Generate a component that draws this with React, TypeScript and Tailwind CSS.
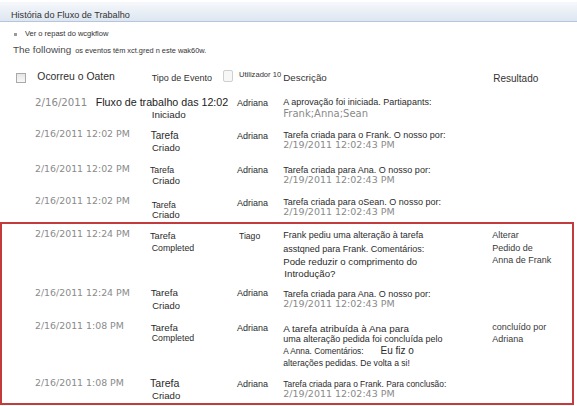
import * as React from "react";

// shared text styles
const gray = "font-['DejaVu_Sans',Verdana,sans-serif] text-[#8a8a8a]";

type RowProps = {
  className: string;
  when: React.ReactNode;
  event: React.ReactNode;
  user: React.ReactNode;
  desc: React.ReactNode;
  result?: React.ReactNode;
};

const Row = ({ className, when, event, user, desc, result }: RowProps) => (
  <div className={`flex items-start ${className}`}>
    <div className="w-[115px] shrink-0 whitespace-nowrap">{when}</div>
    <div className="w-[87px] shrink-0 whitespace-nowrap">{event}</div>
    <div className="w-[46.3px] shrink-0 whitespace-nowrap">{user}</div>
    <div className="w-[209px] shrink-0 whitespace-nowrap">{desc}</div>
    <div className="whitespace-nowrap text-[9px] text-[#3a3a3a]">{result}</div>
  </div>
);

const When = ({ children }: { children: React.ReactNode }) => (
  <div className={`${gray} text-[9.4px] leading-[12px]`}>{children}</div>
);

const TaskCreated = ({ text, due, size = "text-[9px]" }: { text: string; due: string; size?: string }) => (
  <div className="pt-[2.3px]">
    <div className={`${size} leading-[10px]`}>{text}</div>
    <div className={`${gray} text-[9.5px] leading-[9px]`}>{due}</div>
  </div>
);

const App = () => {
  return (
    <div className="w-[577px] h-[406px] overflow-hidden bg-white font-['Liberation_Sans',Arial,sans-serif] text-[#2b2b2b]">
      <div className="mt-[2px] h-[20px] border-b border-[#b6c5d9] bg-linear-to-b from-[#f6f8fb] to-[#dde6f1] pl-[11px] pt-[7px] text-[9.1px] leading-[12px] text-[#333]">
        História do Fluxo de Trabalho
      </div>

      <div className="mt-[7px] flex items-center h-[10px]">
        <span className="ml-[14px] w-[3px] h-[3px] bg-[#9a9a9a]"></span>
        <span className="ml-[8px] text-[7.5px] leading-[10px] text-[#333]">Ver o repast do wcgkflow</span>
      </div>

      <div className="mt-[5px] flex items-baseline pl-[13px] leading-[12px] whitespace-nowrap">
        <span className="text-[9.9px] text-[#4a4a4a]">The following</span>
        <span className="ml-[4px] text-[7.4px] text-[#333]">os eventos têm xct.gred n este wak60w.</span>
      </div>

      {/* column headers */}
      <div className="mt-[12px] flex items-start h-[16px] leading-[12px] whitespace-nowrap">
        <div className="ml-[16px] mt-[3.7px] w-[10px] h-[10.3px] shrink-0 border border-[#a9a9a9] bg-linear-to-b from-[#e6e6e6] to-[#f8f8f8]"></div>
        <div className="ml-[11.3px] w-[114.4px] shrink-0 pt-[2px] text-[10.4px] text-[#2e2e2e]">Ocorreu o Oaten</div>
        <div className="w-[71px] shrink-0 pt-[3.3px] text-[9px] text-[#333]">Tipo de Evento</div>
        <div className="mt-[1px] w-[10.6px] h-[12px] shrink-0 rounded-[2px] border border-[#cfcfcf] bg-[#f7f7f7]"></div>
        <div className="ml-[5.7px] w-[44.3px] shrink-0 pt-0 text-[7.6px] text-[#333]">Utilizador 10</div>
        <div className="w-[210px] shrink-0 pt-[3.3px] text-[9.8px] text-[#333]">Descrição</div>
        <div className="pt-[4.3px] text-[10px] text-[#333]">Resultado</div>
      </div>

      <div className="mt-[11px]">
        <Row
          className="h-[32px] pl-[35px]"
          when={
            <div className="flex items-baseline leading-[12px]">
              <span className={`${gray} w-[60.7px] shrink-0 text-[10.2px]`}>2/16/2011</span>
              <span className="shrink-0 text-[10.7px] text-[#222]">Fluxo de trabalho das 12:02</span>
            </div>
          }
          event={<div className="pt-[13px] pl-[1.7px] text-[9.9px] leading-[12px]">Iniciado</div>}
          user={<div className="pt-[1px] text-[9px] leading-[12px]">Adriana</div>}
          desc={
            <div>
              <div className="text-[9px] leading-[12px]">A aprovação foi iniciada. Partiapants:</div>
              <div className={`${gray} text-[10px] leading-[12px]`}>Frank;Anna;Sean</div>
            </div>
          }
        />
        <Row
          className="h-[35px] pl-[35px]"
          when={<When>2/16/2011 12:02 PM</When>}
          event={
            <div className="pt-[2px] leading-[12.2px]">
              <div className="pl-[0.7px] text-[10px]">Tarefa</div>
              <div className="pl-[2px] text-[9.5px]">Criado</div>
            </div>
          }
          user={<div className="pt-[2px] text-[9px] leading-[12px]">Adriana</div>}
          desc={<TaskCreated text="Tarefa criada para o Frank. O nosso por:" due="2/19/2011 12:02:43 PM" />}
        />
        <Row
          className="h-[32px] pl-[35px]"
          when={<When>2/16/2011 12:02 PM</When>}
          event={
            <div className="pt-[2px] leading-[10.7px]">
              <div className="text-[8.7px]">Tarefa</div>
              <div className="pl-[2.3px] text-[9.4px]">Criado</div>
            </div>
          }
          user={<div className="pt-[1px] text-[9px] leading-[12px]">Adriana</div>}
          desc={<TaskCreated text="Tarefa criada para Ana. O nosso por:" due="2/19/2011 12:02:43 PM" />}
        />
        <Row
          className="h-[27px] pl-[35px]"
          when={<When>2/16/2011 12:02 PM</When>}
          event={
            <div className="pt-[5px] leading-[10px]">
              <div className="pl-[1.7px] text-[8.7px]">Tarefa</div>
              <div className="pl-[2px] text-[9.4px]">Criado</div>
            </div>
          }
          user={<div className="pt-[1.7px] text-[9px] leading-[12px]">Adriana</div>}
          desc={<TaskCreated text="Tarefa criada para oSean. O nosso por:" due="2/19/2011 12:02:43 PM" />}
        />

        {/* change request block */}
        <div className="w-[574px] border-2 border-[#c23c3d] pt-[4px]">
          <Row
            className="h-[59px] pl-[33px]"
            when={<When>2/16/2011 12:24 PM</When>}
            event={
              <div className="pt-[2px] leading-[12px]">
                <div className="text-[9.2px]">Tarefa</div>
                <div className="pl-[1.7px] text-[8.8px]">Completed</div>
              </div>
            }
            user={<div className="pt-[2px] pl-[2px] text-[8.6px] leading-[12px]">Tiago</div>}
            desc={
              <div className="pt-[0.3px]">
                <div className="text-[9px] leading-[14px]">Frank pediu uma alteração à tarefa</div>
                <div className="text-[9px] leading-[14px]">asstqned para Frank. Comentários:</div>
                <div className="text-[9.6px] leading-[12.5px]">Pode reduzir o comprimento do</div>
                <div className="pl-[1px] text-[9.7px] leading-[10px]">Introdução?</div>
              </div>
            }
            result={
              <div className="pt-[1.3px] leading-[12.5px]">
                <div>Alterar</div>
                <div>Pedido de</div>
                <div>Anna de Frank</div>
              </div>
            }
          />
          <Row
            className="h-[33px] pl-[33px]"
            when={<When>2/16/2011 12:24 PM</When>}
            event={
              <div className="leading-[12.7px]">
                <div className="pl-[0.7px] text-[9.8px]">Tarefa</div>
                <div className="pl-[2.3px] text-[9.4px]">Criado</div>
              </div>
            }
            user={<div className="text-[9px] leading-[12px]">Adriana</div>}
            desc={<TaskCreated text="Tarefa criada para Ana. O nosso por:" due="2/19/2011 12:02:43 PM" />}
          />
          <Row
            className="h-[57px] pl-[33px]"
            when={<When>2/16/2011 1:08 PM</When>}
            event={
              <div className="pt-[2px] leading-[11px]">
                <div className="pl-[0.7px] text-[9.8px]">Tarefa</div>
                <div className="pl-[1.7px] text-[8.8px]">Completed</div>
              </div>
            }
            user={<div className="pt-[1.7px] text-[9px] leading-[12px]">Adriana</div>}
            desc={
              <div className="pt-[3px]">
                <div className="text-[9.9px] leading-[11px]">A tarefa atribuída à Ana para</div>
                <div className="text-[9px] leading-[10.5px]">uma alteração pedida foi concluída pelo</div>
                <div className="flex items-baseline leading-[12px]">
                  <span className="shrink-0 text-[8.3px]">A Anna. Comentários:</span>
                  <span className="ml-[17px] shrink-0 text-[10px]">Eu fiz o</span>
                </div>
                <div className="text-[8.6px] leading-[12px]">alterações pedidas. De volta a si!</div>
              </div>
            }
            result={
              <div className="pt-[0.7px] leading-[12.6px]">
                <div>concluído por</div>
                <div>Adriana</div>
              </div>
            }
          />
          <Row
            className="h-[26px] pl-[33px]"
            when={<When>2/16/2011 1:08 PM</When>}
            event={
              <div className="pt-[1.3px] leading-[11.7px]">
                <div className="text-[10.6px]">Tarefa</div>
                <div className="pl-[2px] text-[9.6px]">Criado</div>
              </div>
            }
            user={<div className="pt-[1.3px] text-[9px] leading-[12px]">Adriana</div>}
            desc={
              <TaskCreated
                text="Tarefa criada para o Frank. Para conclusão:"
                due="2/19/2011 12:02:43 PM"
                size="text-[8.4px]"
              />
            }
          />
        </div>
      </div>
    </div>
  );
};

export default App;
